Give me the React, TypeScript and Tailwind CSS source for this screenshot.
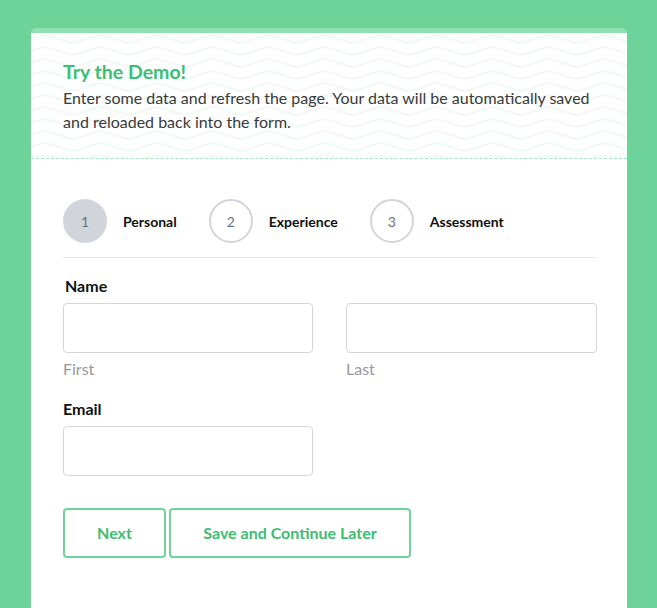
import React from "react";

const steps = [
  { n: 1, label: "Personal", active: true },
  { n: 2, label: "Experience", active: false },
  { n: 3, label: "Assessment", active: false },
];

function Waves() {
  return (
    <svg className="absolute inset-0 h-full w-full" aria-hidden="true">
      <defs>
        <pattern id="wave" width="56" height="12" patternUnits="userSpaceOnUse">
          <path d="M0 6 C 14 1, 14 1, 28 6 S 42 11, 56 6" fill="none" stroke="#f0f9f5" strokeWidth="2" />
        </pattern>
      </defs>
      <rect width="100%" height="100%" fill="url(#wave)" />
    </svg>
  );
}

export default function App() {
  return (
    <div className="min-h-[608px] bg-[#6dd399] pt-[28px] font-['Lato','Noto_Sans',sans-serif]">
      <div className="ml-[31px] w-[596px] min-h-[580px] rounded-t-[5px] border-t-[5px] border-[#91e0b3] bg-white">
        <div className="relative border-b border-dashed border-[#a3ebc1] px-[32px] pt-[27px] pb-[24px]">
          <Waves />
          <div className="relative">
            <h2 className="text-[19.5px] leading-[24px] font-bold text-[#3bbf73]">Try the Demo!</h2>
            <p className="mt-[2px] text-[16px] leading-[24px] text-[#3a3a3a]">
              Enter some data and refresh the page. Your data will be automatically saved and reloaded back into the form.
            </p>
          </div>
        </div>

        <div className="pl-[32px] pr-[30px] pt-[40px]">
          <div className="mr-[2px] flex items-center gap-[32px] border-b border-[#e5e5e5] pb-[14px]">
            {steps.map((s) => (
              <div key={s.n} className="flex items-center gap-[16px]">
                <div
                  className={
                    s.active
                      ? "flex h-[44px] w-[44px] items-center justify-center rounded-full bg-[#d1d5db] text-[14px] text-[#6b7280]"
                      : "flex h-[44px] w-[44px] items-center justify-center rounded-full border-2 border-[#d1d5db] text-[14px] text-[#6b7280]"
                  }
                >
                  {s.n}
                </div>
                <span className="text-[14px] font-bold text-[#111]">{s.label}</span>
              </div>
            ))}
          </div>

          <div className="mt-[18px]">
            <label className="ml-[2px] block text-[16px] leading-[20px] font-bold text-[#111]">Name</label>
            <div className="mt-[7px] grid grid-cols-[250px_251px] gap-[33px]">
              <div>
                <input className="h-[50px] w-full rounded-[4px] border border-[#d6d6d6] px-3 outline-none" />
                <div className="mt-[6px] text-[16px] leading-[20px] text-[#999]">First</div>
              </div>
              <div>
                <input className="h-[50px] w-full rounded-[4px] border border-[#d6d6d6] px-3 outline-none" />
                <div className="mt-[6px] text-[16px] leading-[20px] text-[#999]">Last</div>
              </div>
            </div>
          </div>

          <div className="mt-[20px]">
            <label className="block text-[16px] leading-[20px] font-bold text-[#111]">Email</label>
            <input className="mt-[7px] h-[50px] w-[250px] rounded-[4px] border border-[#d6d6d6] px-3 outline-none" />
          </div>

          <div className="mt-[32px] flex gap-[3px]">
            <button className="h-[50px] w-[103px] rounded-[4px] border-2 border-[#6fd49a] text-[16px] font-bold text-[#3dbd72]">
              Next
            </button>
            <button className="h-[50px] w-[242px] rounded-[4px] border-2 border-[#6fd49a] text-[16px] font-bold text-[#3dbd72]">
              Save and Continue Later
            </button>
          </div>
        </div>
      </div>
    </div>
  );
}
